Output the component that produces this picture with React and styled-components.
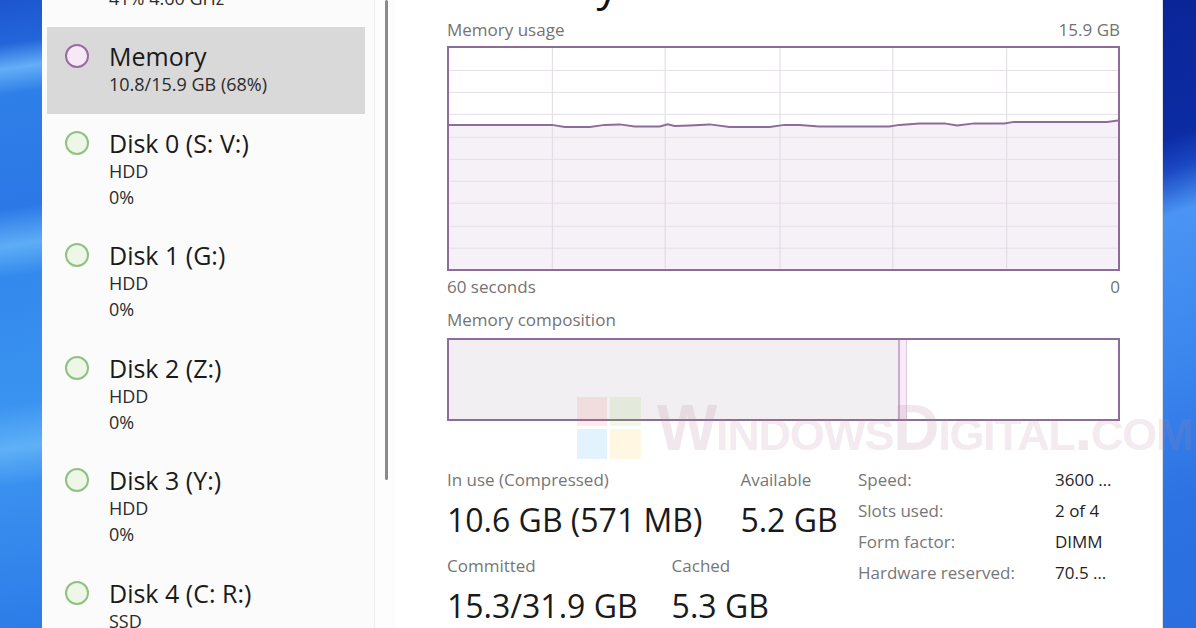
import React from 'react';
import styled, { createGlobalStyle } from 'styled-components';

const GlobalStyle = createGlobalStyle`
  html, body { margin: 0; padding: 0; overflow: hidden; }
  body { font-family: "Open Sans", "Noto Sans", "Liberation Sans", sans-serif; }
  #root { width: 1196px; height: 628px; }
`;

const Desktop = styled.div`
  position: relative;
  width: 1196px;
  height: 628px;
  overflow: hidden;
  box-sizing: border-box;
  padding-left: 42px;
  display: flex;
  background:
    linear-gradient(160deg, #0a2597 0%, #0c2ca4 22%, #1a47c2 27%, #4a94f4 34%, #3d88ef 55%, #2c72e2 80%, #2a6ee0 100%) right top / 34px 100% no-repeat,
    linear-gradient(172deg, #1c56cf 0%, #2366da 7%, #64aef7 11%, #2f7fe8 15%, #2b78e6 33%, #5dadf6 39%, #3389ec 44%, #3a93f0 64%, #5fb0f7 71%, #3a90ef 77%, #2d7ce8 100%) left top / 42px 100% no-repeat,
    #1e5fd6;
`;

const Window = styled.div`
  width: 1121px;
  height: 100%;
  display: flex;
  background: #fff;
  border-right: 1px solid rgba(0, 0, 0, 0.12);
  box-sizing: border-box;
`;

const Sidebar = styled.nav`
  flex: none;
  width: 333px;
  height: 100%;
  background: #fbfbfb;
  border-right: 1px solid #ececec;
  box-sizing: border-box;
  overflow: hidden;
`;

const List = styled.div`
  margin-top: -59.5px;
  display: flex;
  flex-direction: column;
`;

const Item = styled.div`
  display: flex;
  align-items: flex-start;
  gap: 20px;
  margin: 0 9px 0 5px;
  padding: 14px 0 16.5px 18px;
  background: ${p => (p.$selected ? '#d9d9d9' : 'transparent')};
`;

const Dot = styled.span`
  flex: none;
  width: 24px;
  height: 24px;
  box-sizing: border-box;
  border-radius: 50%;
  border: 2px solid ${p => p.$ring};
  background: ${p => p.$fill};
  margin-top: 3px;
`;

const ItemText = styled.div`
  display: flex;
  flex-direction: column;
`;

const ItemTitle = styled.div`
  font-size: 25px;
  line-height: 30px;
  color: #1a1a1a;
  white-space: nowrap;
`;

const ItemSub = styled.div`
  font-size: 18px;
  line-height: 26px;
  color: #2b2b2b;
  white-space: nowrap;
`;

const ScrollLane = styled.div`
  flex: none;
  width: 20px;
  height: 100%;
  background: #fdfdfd;
  padding-left: 10px;
  box-sizing: border-box;
`;

const Thumb = styled.div`
  width: 3px;
  height: 480px;
  border-radius: 2px;
  background: #8a8a8a;
`;

const Main = styled.main`
  flex: 1;
  min-width: 0;
  display: flex;
  flex-direction: column;
  padding: 0 42px 0 52px;
  background: #fff;
`;

const Header = styled.div`
  display: flex;
  justify-content: space-between;
  align-items: baseline;
  margin-top: -39px;
  height: 44px;
`;

const PageTitle = styled.h1`
  margin: 0;
  font-size: 44px;
  line-height: 44px;
  font-weight: 400;
  color: #111;
`;

const PageMeta = styled.div`
  font-size: 24px;
  color: #6f6f6f;
`;

const LabelRow = styled.div`
  display: flex;
  justify-content: space-between;
  margin-top: ${p => p.$mt || 0}px;
  font-size: 17px;
  line-height: 22px;
  color: #737373;
`;

const GraphBox = styled.div`
  margin-top: 5px;
  height: 225px;
  border: 2px solid #8d6c97;
  box-sizing: border-box;
  background: #fff;
`;

const GraphSvg = styled.svg`
  display: block;
  width: 100%;
  height: 100%;
`;

const CompBar = styled.div`
  margin-top: 7px;
  height: 89px;
  display: flex;
  border: 2px solid #8d6c97;
  box-sizing: border-box;
  background: #fff;
`;

const Segment = styled.div`
  flex: ${p => (p.$w ? 'none' : '1')};
  width: ${p => (p.$w ? `${p.$w}px` : 'auto')};
  background: ${p => p.$fill};
  border-right: ${p => (p.$edge ? `${p.$edgeW || 1}px solid ${p.$edge}` : 'none')};
`;

const Stats = styled.section`
  margin-top: 43px;
  display: flex;
  align-items: flex-start;
`;

const LeftStats = styled.div`
  flex: none;
  width: 411px;
  padding-top: 5px;
  display: flex;
  flex-direction: column;
`;

const StatRow = styled.div`
  display: flex;
  gap: ${p => p.$gap}px;
  & + & {
    margin-top: 13px;
  }
`;

const StatBlock = styled.div`
  display: flex;
  flex-direction: column;
`;

const StatLabel = styled.div`
  font-size: 17px;
  line-height: 22px;
  color: #767676;
  white-space: nowrap;
`;

const StatValue = styled.div`
  margin-top: 7px;
  font-size: 32px;
  line-height: 44px;
  color: #1a1a1a;
  white-space: nowrap;
`;

const Specs = styled.dl`
  margin: 0;
  display: grid;
  grid-template-columns: 197px auto;
  align-content: start;
  font-size: 17px;
  line-height: 31px;
`;

const SpecKey = styled.dt`
  color: #777;
  white-space: nowrap;
`;

const SpecVal = styled.dd`
  margin: 0;
  color: #1f1f1f;
  white-space: nowrap;
`;

const WatermarkLogo = styled.svg`
  position: absolute;
  left: 577px;
  top: 397px;
  width: 64px;
  height: 62px;
  pointer-events: none;
`;

const Watermark = styled.div`
  position: absolute;
  left: 657px;
  top: 396px;
  font-family: "Liberation Sans", Arial, sans-serif;
  font-weight: 700;
  font-size: 64px;
  line-height: 64px;
  font-variant: small-caps;
  letter-spacing: -1.3px;
  color: rgba(180, 130, 155, 0.18);
  white-space: nowrap;
  pointer-events: none;
`;

const devices = [
  { title: 'CPU', lines: ['41% 4.60 GHz'], ring: '#4f9fd8', fill: '#e8f2fa' },
  { title: 'Memory', lines: ['10.8/15.9 GB (68%)'], ring: '#9c6aa3', fill: '#f6e8f6', selected: true },
  { title: 'Disk 0 (S: V:)', lines: ['HDD', '0%'] },
  { title: 'Disk 1 (G:)', lines: ['HDD', '0%'] },
  { title: 'Disk 2 (Z:)', lines: ['HDD', '0%'] },
  { title: 'Disk 3 (Y:)', lines: ['HDD', '0%'] },
  { title: 'Disk 4 (C: R:)', lines: ['SSD', '0%'] },
];

const linePts = [
  [0, 77], [103, 77], [116, 79], [141, 79], [156, 77], [171, 76.5], [186, 78.5], [211, 78.5],
  [219, 76.5], [226, 78], [241, 77.5], [261, 76.5], [281, 79], [321, 79], [336, 77], [351, 77],
  [371, 78.5], [441, 78.5], [451, 77], [471, 75.5], [496, 75.5], [509, 77.5], [526, 75.5],
  [556, 75.5], [566, 74], [659, 74], [670, 72.5],
];

const vLines = [103, 216, 331, 444, 558];
const hLines = [22, 44, 66, 89, 111, 133, 155, 178, 200];

function UsageGraph() {
  const line = linePts.map(([x, y], i) => `${i ? 'L' : 'M'}${x} ${y}`).join(' ');
  const area = `${line} L670 221 L0 221 Z`;
  return (
    <GraphSvg viewBox="0 0 670 221" preserveAspectRatio="none">
      <path d={area} fill="#f6f0f7" />
      {hLines.map(y => (
        <line key={`h${y}`} x1="0" x2="670" y1={y + 0.5} y2={y + 0.5} stroke="#e5dfe7" strokeWidth="1" />
      ))}
      {vLines.map(x => (
        <line key={`v${x}`} x1={x + 0.5} x2={x + 0.5} y1="0" y2="221" stroke="#e0d9e2" strokeWidth="1" />
      ))}
      <path d={line} fill="none" stroke="#8d6c97" strokeWidth="2" />
    </GraphSvg>
  );
}

export default function App() {
  return (
    <>
      <GlobalStyle />
      <Desktop>
        <Window>
          <Sidebar>
            <List>
              {devices.map(d => (
                <Item key={d.title} $selected={d.selected}>
                  <Dot $ring={d.ring || '#90c27f'} $fill={d.fill || '#eef6e7'} />
                  <ItemText>
                    <ItemTitle>{d.title}</ItemTitle>
                    {d.lines.map((l, i) => (
                      <ItemSub key={i}>{l}</ItemSub>
                    ))}
                  </ItemText>
                </Item>
              ))}
            </List>
          </Sidebar>
          <ScrollLane>
            <Thumb />
          </ScrollLane>
          <Main>
            <Header>
              <PageTitle>Memory</PageTitle>
              <PageMeta>16.0 GB</PageMeta>
            </Header>
            <LabelRow $mt={14}>
              <span>Memory usage</span>
              <span>15.9 GB</span>
            </LabelRow>
            <GraphBox>
              <UsageGraph />
            </GraphBox>
            <LabelRow $mt={5}>
              <span>60 seconds</span>
              <span>0</span>
            </LabelRow>
            <LabelRow $mt={11}>
              <span>Memory composition</span>
            </LabelRow>
            <CompBar>
              <Segment $w={449} $fill="#f2eff3" $edge="#c9abcd" $edgeW={2} />
              <Segment $w={6} $fill="#f6ebf6" $edge="#dcc9de" />
              <Segment $fill="#ffffff" />
            </CompBar>
            <Stats>
              <LeftStats>
                <StatRow $gap={38}>
                  <StatBlock>
                    <StatLabel>In use (Compressed)</StatLabel>
                    <StatValue>10.6 GB (571 MB)</StatValue>
                  </StatBlock>
                  <StatBlock>
                    <StatLabel>Available</StatLabel>
                    <StatValue>5.2 GB</StatValue>
                  </StatBlock>
                </StatRow>
                <StatRow $gap={34}>
                  <StatBlock>
                    <StatLabel>Committed</StatLabel>
                    <StatValue>15.3/31.9 GB</StatValue>
                  </StatBlock>
                  <StatBlock>
                    <StatLabel>Cached</StatLabel>
                    <StatValue>5.3 GB</StatValue>
                  </StatBlock>
                </StatRow>
              </LeftStats>
              <Specs>
                <SpecKey>Speed:</SpecKey>
                <SpecVal>3600 …</SpecVal>
                <SpecKey>Slots used:</SpecKey>
                <SpecVal>2 of 4</SpecVal>
                <SpecKey>Form factor:</SpecKey>
                <SpecVal>DIMM</SpecVal>
                <SpecKey>Hardware reserved:</SpecKey>
                <SpecVal>70.5 …</SpecVal>
              </Specs>
            </Stats>
          </Main>
        </Window>
        <WatermarkLogo viewBox="0 0 64 62">
          <rect x="0" y="0" width="30" height="29" fill="rgba(240,90,70,0.12)" />
          <rect x="33" y="0" width="31" height="29" fill="rgba(130,195,50,0.12)" />
          <rect x="0" y="32" width="30" height="30" fill="rgba(20,160,240,0.12)" />
          <rect x="33" y="32" width="31" height="30" fill="rgba(255,190,20,0.12)" />
        </WatermarkLogo>
        <Watermark>WindowsDigital.com</Watermark>
      </Desktop>
    </>
  );
}
